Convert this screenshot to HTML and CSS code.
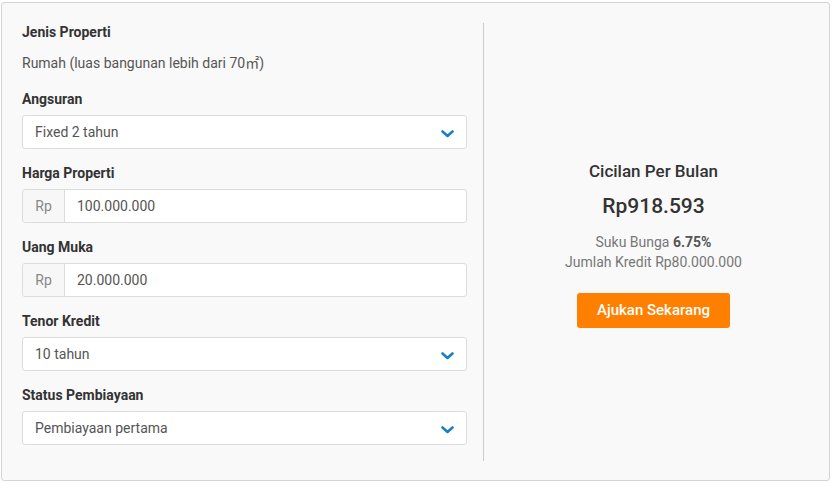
FILE: index.html
```html
<!DOCTYPE html>
<html lang="id">
<head>
<meta charset="utf-8">
<title>Simulasi KPR</title>
<link rel="stylesheet" href="styles.css">
</head>
<body>
<div class="calc">
  <div class="calc-form">
    <div class="field field-static">
      <div class="field-label">Jenis Properti</div>
      <div class="static-value">Rumah (luas bangunan lebih dari 70<span class="unit">㎡</span>)</div>
    </div>
    <div class="field">
      <div class="field-label">Angsuran</div>
      <div class="select">
        <span class="select-text">Fixed 2 tahun</span>
        <svg class="chevron" width="13" height="8" viewBox="0 0 13 8"><path d="M1.5 1.5 L6.5 6 L11.5 1.5" fill="none" stroke="#1a7fc4" stroke-width="2.6" stroke-linecap="round" stroke-linejoin="round"/></svg>
      </div>
    </div>
    <div class="field">
      <div class="field-label">Harga Properti</div>
      <div class="input-group">
        <span class="addon">Rp</span>
        <span class="input-text">100.000.000</span>
      </div>
    </div>
    <div class="field">
      <div class="field-label">Uang Muka</div>
      <div class="input-group">
        <span class="addon">Rp</span>
        <span class="input-text">20.000.000</span>
      </div>
    </div>
    <div class="field">
      <div class="field-label">Tenor Kredit</div>
      <div class="select">
        <span class="select-text">10 tahun</span>
        <svg class="chevron" width="13" height="8" viewBox="0 0 13 8"><path d="M1.5 1.5 L6.5 6 L11.5 1.5" fill="none" stroke="#1a7fc4" stroke-width="2.6" stroke-linecap="round" stroke-linejoin="round"/></svg>
      </div>
    </div>
    <div class="field field-last">
      <div class="field-label">Status Pembiayaan</div>
      <div class="select">
        <span class="select-text">Pembiayaan pertama</span>
        <svg class="chevron" width="13" height="8" viewBox="0 0 13 8"><path d="M1.5 1.5 L6.5 6 L11.5 1.5" fill="none" stroke="#1a7fc4" stroke-width="2.6" stroke-linecap="round" stroke-linejoin="round"/></svg>
      </div>
    </div>
  </div>
  <div class="calc-divider"></div>
  <div class="calc-result">
    <div class="result-title">Cicilan Per Bulan</div>
    <div class="result-amount">Rp918.593</div>
    <div class="result-detail">Suku Bunga <b>6.75%</b></div>
    <div class="result-detail">Jumlah Kredit Rp80.000.000</div>
    <button class="apply-btn" type="button">Ajukan Sekarang</button>
  </div>
</div>
</body>
</html>
```

FILE: styles.css
```css
html, body {
  margin: 0;
  padding: 0;
  background: #ffffff;
}

body {
  font-family: Roboto, "Liberation Sans", Arial, sans-serif;
  font-size: 14px;
  color: #555;
}

.calc {
  box-sizing: border-box;
  width: 829px;
  height: 479px;
  margin: 2px 0 0 1px;
  border: 1px solid #d4d4d4;
  border-radius: 3px;
  background: #f9f9f9;
  padding: 20px 0 19px 20px;
  display: flex;
}

.calc-form {
  width: 445px;
  flex: none;
}

.field {
  margin-bottom: 15px;
}

.field-static {
  margin-bottom: 18px;
}

.field-last {
  margin-bottom: 0;
}

.field-label {
  font-weight: 700;
  color: #333;
  line-height: 18px;
  margin-bottom: 7px;
}

.static-value {
  line-height: 18px;
  padding-top: 6px;
  color: #555;
}

.unit {
  font-family: "Noto Sans CJK JP", "DejaVu Sans", sans-serif;
  font-size: 14px;
  line-height: 1;
}

.select,
.input-group {
  box-sizing: border-box;
  height: 34px;
  border: 1px solid #dcdcdc;
  border-radius: 3px;
  background: #fff;
  display: flex;
  align-items: center;
}

.select {
  justify-content: space-between;
  padding: 0 12px 0 12px;
}

.select-text,
.input-text {
  color: #555;
  line-height: 18px;
}

.chevron {
  display: block;
  margin-top: 3px;
}

.addon {
  box-sizing: border-box;
  width: 42px;
  height: 100%;
  flex: none;
  display: flex;
  align-items: center;
  justify-content: center;
  background: #f7f7f7;
  border-right: 1px solid #dcdcdc;
  border-radius: 3px 0 0 3px;
  color: #888;
}

.input-text {
  padding-left: 12px;
}

.calc-divider {
  width: 1px;
  background: #cccccc;
  margin-left: 16px;
  flex: none;
}

.calc-result {
  flex: 1;
  display: flex;
  flex-direction: column;
  align-items: center;
  justify-content: center;
  padding: 4px 6px 0 0;
}

.result-title {
  font-size: 17px;
  font-weight: 500;
  color: #333;
  line-height: 20px;
}

.result-amount {
  font-size: 21px;
  font-weight: 500;
  color: #333;
  line-height: 26px;
  margin-top: 12px;
  margin-bottom: 13px;
}

.result-detail {
  color: #777;
  line-height: 20px;
}

.result-detail b {
  color: #555;
  font-weight: 700;
}

.apply-btn {
  margin-top: 21px;
  width: 153px;
  height: 35px;
  border: 0;
  border-radius: 3px;
  background: #ff8000;
  color: #fff;
  font-family: inherit;
  font-size: 15px;
  font-weight: 500;
  padding: 0;
  cursor: pointer;
}
```
